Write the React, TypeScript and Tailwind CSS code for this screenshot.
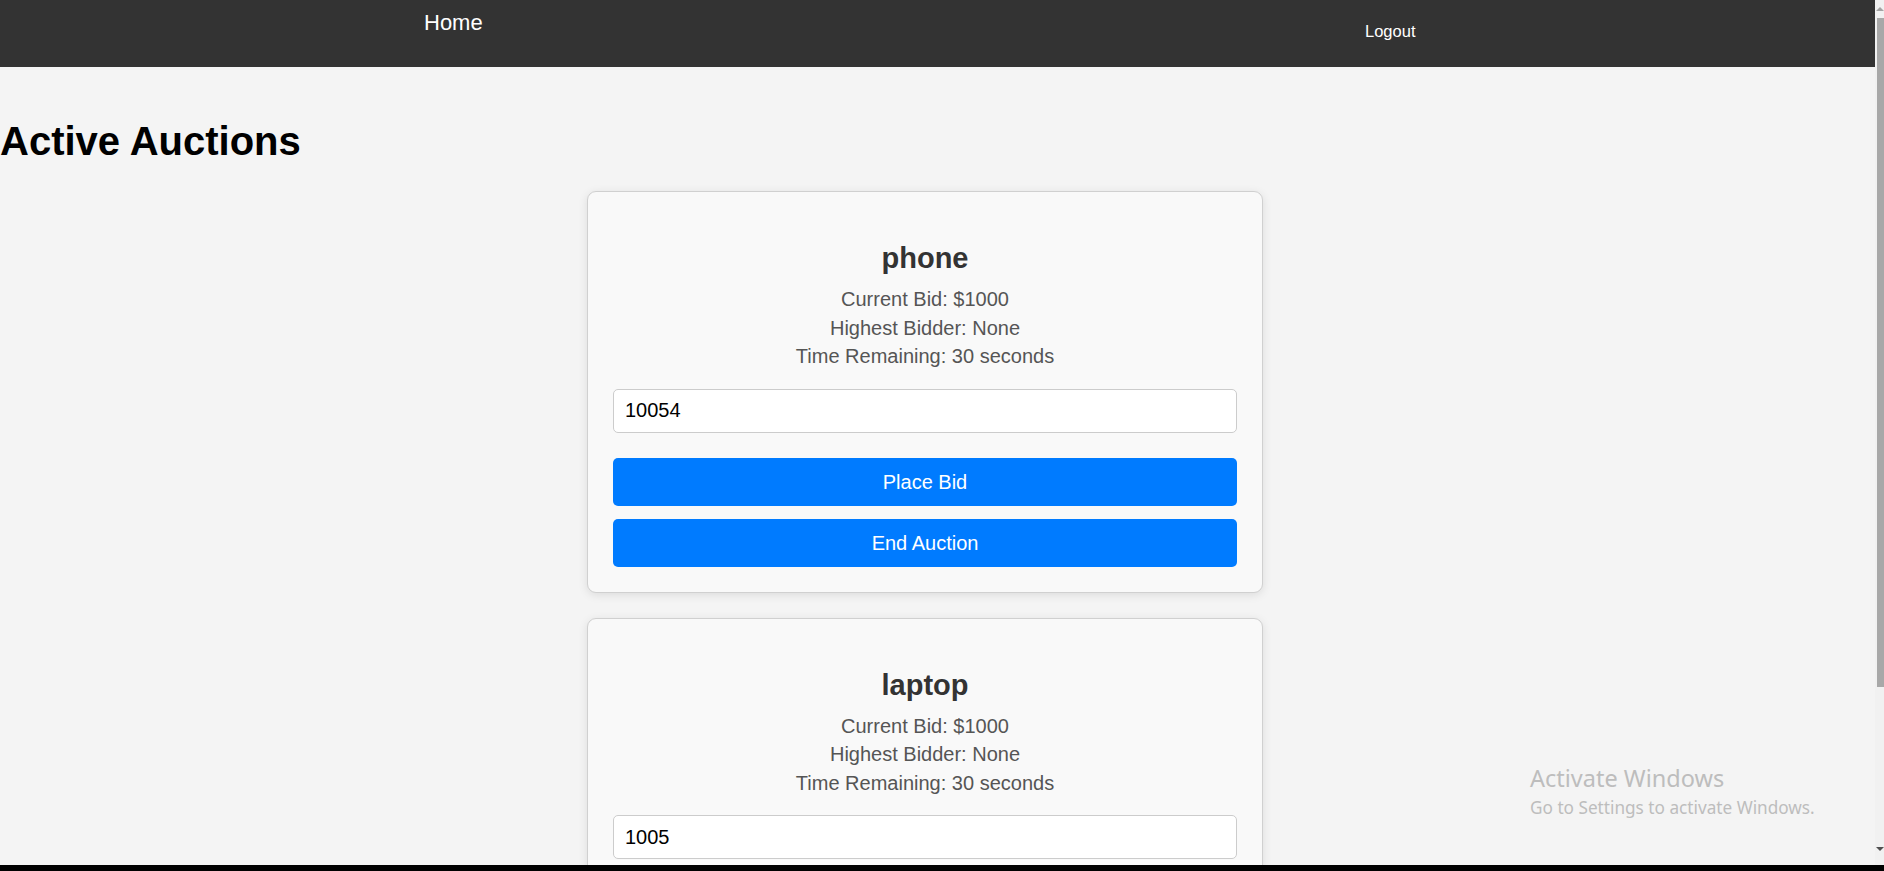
import React from 'react';

type Auction = {
  name: string;
  currentBid: number;
  highestBidder: string;
  timeLeft: number;
  draft: string;
};

const auctions: Auction[] = [
  { name: 'phone', currentBid: 1000, highestBidder: 'None', timeLeft: 30, draft: '10054' },
  { name: 'laptop', currentBid: 1000, highestBidder: 'None', timeLeft: 30, draft: '1005' },
];

const AuctionCard: React.FC<{ auction: Auction }> = ({ auction }) => {
  const [bid, setBid] = React.useState(auction.draft);

  return (
    <div className="ml-[587px] w-[676px] shrink-0 rounded-[9px] border border-[#d0d0d0] bg-[#f9f9f9] px-[25px] pb-[25px] pt-[25px] text-center shadow-[0_2px_10px_rgba(0,0,0,0.1)]">
      <h2 className="mt-[24px] text-[29px] font-bold leading-[34px] text-[#333]">{auction.name}</h2>
      <div className="mt-[10px] text-[20px] leading-[28.5px] text-[#555]">
        <p>Current Bid: ${auction.currentBid}</p>
        <p>Highest Bidder: {auction.highestBidder}</p>
        <p>Time Remaining: {auction.timeLeft} seconds</p>
      </div>
      <input
        type="number"
        value={bid}
        onChange={(e) => setBid(e.target.value)}
        className="mt-[18px] block h-[44px] w-full rounded-[5px] border border-[#ccc] bg-white px-[11px] text-left text-[20px] text-black outline-none"
      />
      {/* Actions */}
      <button className="mt-[25px] block h-[48px] w-full rounded-[5px] bg-[#007bff] text-[20px] text-white">
        Place Bid
      </button>
      <button className="mt-[13px] block h-[48px] w-full rounded-[5px] bg-[#007bff] text-[20px] text-white">
        End Auction
      </button>
    </div>
  );
};

const Scrollbar: React.FC = () => (
  <div className="flex w-[9px] shrink-0 flex-col bg-[#f1f1f1]">
    <div className="flex h-[18px] items-center justify-end">
      <div className="h-0 w-0 border-x-[4px] border-b-[4px] border-x-transparent border-b-[#a3a3a3]" />
    </div>
    <div className="ml-[2px] h-[669px] bg-[#a8a8a8]" />
    <div className="flex-1" />
    <div className="flex h-[18px] items-start justify-end">
      <div className="h-0 w-0 border-x-[4px] border-t-[4px] border-x-transparent border-t-[#505050]" />
    </div>
  </div>
);

export default function App() {
  return (
    <div className="relative flex h-[871px] flex-col overflow-hidden font-['Liberation_Sans',Arial,sans-serif]">
      <div className="flex h-[865px]">
        <div className="flex w-[1875px] shrink-0 flex-col overflow-hidden bg-[#f4f4f4]">
          <nav className="flex h-[67px] shrink-0 bg-[#333] text-white">
            <div className="w-[1365px] pl-[424px] pt-[10px] text-[22px] leading-[25px]">Home</div>
            <div className="pt-[22px] text-[16.5px] leading-[19px]">Logout</div>
          </nav>

          <h1 className="mt-[51px] text-[40px] font-bold leading-[46px] text-black">Active Auctions</h1>

          <div className="mt-[27px] flex flex-col gap-[25px]">
            {auctions.map((a) => (
              <AuctionCard key={a.name} auction={a} />
            ))}
          </div>
        </div>
        <Scrollbar />
      </div>
      <div className="h-[6px] shrink-0 bg-black" />

      {/* Windows watermark */}
      <div className="pointer-events-none absolute left-[1530px] top-[762px] whitespace-nowrap font-['Noto_Sans',sans-serif] text-[#bdbdbd]">
        <div className="text-[23.5px] leading-[32px]">Activate Windows</div>
        <div className="mt-[3px] text-[17.2px] leading-[22px]">Go to Settings to activate Windows.</div>
      </div>
    </div>
  );
}
